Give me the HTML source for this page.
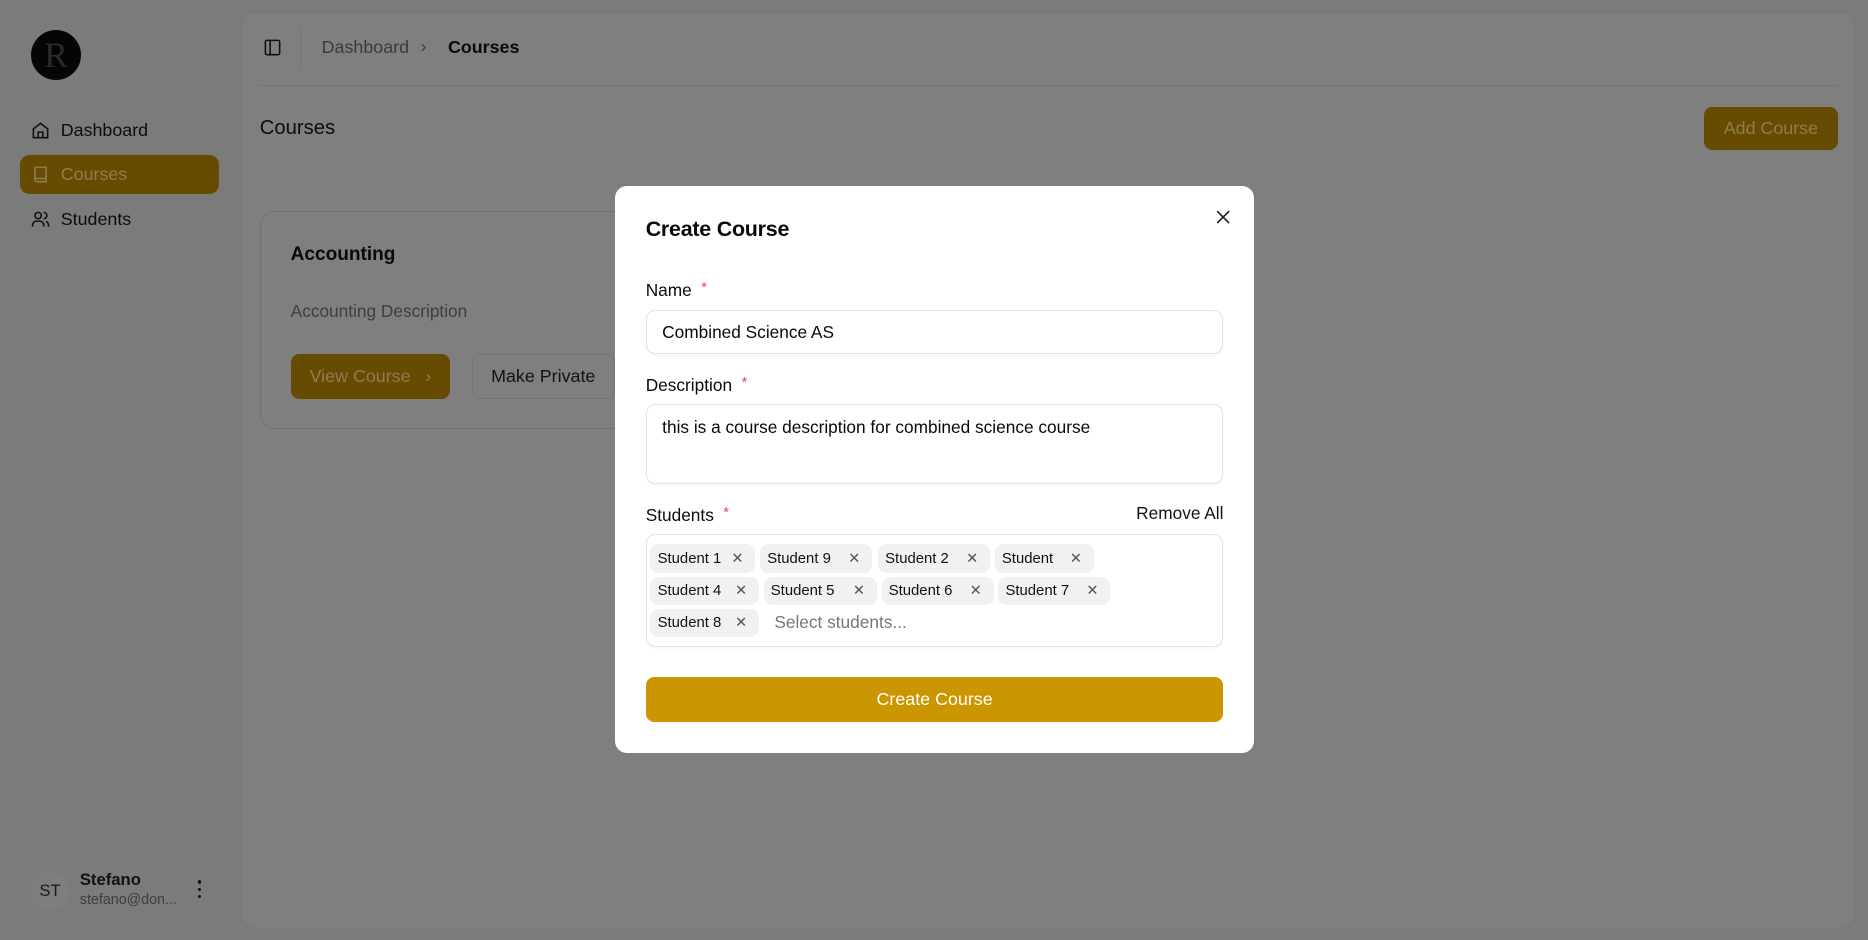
<!DOCTYPE html>
<html><head><meta charset="utf-8"><style>
html,body{margin:0;padding:0;width:1868px;height:940px;overflow:hidden;background:#7b7b7b}
#w{zoom:1.19133;width:1568px;height:789px;position:relative;font-family:"Liberation Sans",sans-serif;color:#0a0a0a}
.a{position:absolute}
.nav{position:absolute;left:17px;width:167px;height:33px;border-radius:8px;display:flex;align-items:center;font-size:15px;color:#0c0c0c}
.nav svg{margin-left:9px;margin-right:9px}
.panel{left:202px;top:10px;width:1355px;height:770px;background:#7f7f7f;border-radius:12px;border:1px solid #777;box-sizing:border-box}
.btn{position:absolute;display:flex;align-items:center;justify-content:center;border-radius:7px;font-size:15px}
.modal{left:516px;top:156px;width:537px;height:476px;background:#fff;border-radius:10px}
.lbl{position:absolute;left:26px;font-size:14.5px;color:#0a0a0a}
.lbl b{color:#e5484d;font-weight:normal;font-size:12px;margin-left:8px;vertical-align:top}
.inp{position:absolute;left:26px;width:485px;border:1px solid #e3e3e3;border-radius:8px;box-sizing:border-box;font-size:14.5px;padding-left:13px;box-shadow:0 1px 2px rgba(0,0,0,.04)}
.chip{position:absolute;height:24px;background:#f1f1f1;border-radius:7px;font-size:12.5px;display:flex;align-items:center;padding-left:6px;box-sizing:border-box;color:#111}
.chip span{margin-left:auto;margin-right:10px;color:#555;font-size:12px}
</style></head><body><div id="w">
<div class="a" style="left:26px;top:25px;width:42px;height:42px;border-radius:50%;background:#050505;color:#2a2a2a;font-size:30px;text-align:center;line-height:42px;font-family:'Liberation Serif',serif">R</div>
<div class="nav" style="top:93px"><svg width="16" height="16" viewBox="0 0 24 24" fill="none" stroke="#111" stroke-width="2"><path d="M3 10l9-7 9 7v11H3z"/><path d="M9 21v-7h6v7"/></svg>Dashboard</div>
<div class="nav" style="top:130px;background:#664b00;color:#8f7d52"><svg width="16" height="16" viewBox="0 0 24 24" fill="none" stroke="#8f7d52" stroke-width="2"><path d="M5 3h14v18H7a2 2 0 0 1-2-2z"/><path d="M5 17h14"/></svg>Courses</div>
<div class="nav" style="top:168px"><svg width="16" height="16" viewBox="0 0 24 24" fill="none" stroke="#111" stroke-width="2"><circle cx="9" cy="7" r="4"/><path d="M2 21v-2a5 5 0 0 1 5-5h4a5 5 0 0 1 5 5v2"/><path d="M16 3a4 4 0 0 1 0 8M22 21v-2a5 5 0 0 0-3-4.5"/></svg>Students</div>
<div class="a" style="left:26px;top:732px;width:32px;height:32px;border-radius:50%;background:#7e7e7e;font-size:14px;line-height:32px;text-align:center;color:#1a1a1a">ST</div>
<div class="a" style="left:67px;top:730px;font-size:14px;font-weight:bold;color:#111">Stefano</div>
<div class="a" style="left:67px;top:749px;font-size:12px;color:#3d3d3d">stefano@don...</div>
<div class="a" style="left:166px;top:739px;width:3px;font-size:0"><div style="width:3px;height:3px;border-radius:50%;background:#111;margin-bottom:3px"></div><div style="width:3px;height:3px;border-radius:50%;background:#111;margin-bottom:3px"></div><div style="width:3px;height:3px;border-radius:50%;background:#111"></div></div>
<div class="a panel"></div>
<svg class="a" style="left:221px;top:32px" width="16" height="16" viewBox="0 0 24 24" fill="none" stroke="#111" stroke-width="2"><rect x="3" y="3" width="18" height="18" rx="2"/><path d="M9 3v18"/></svg>
<div class="a" style="left:252px;top:24px;width:1px;height:32px;background:#737373"></div>
<div class="a" style="left:270px;top:31px;font-size:15px;color:#3a3a3a">Dashboard</div>
<div class="a" style="left:353px;top:30px;font-size:15px;color:#3a3a3a">›</div>
<div class="a" style="left:376px;top:31px;font-size:15px;font-weight:bold;color:#0a0a0a">Courses</div>
<div class="a" style="left:218px;top:71px;width:1325px;height:1px;background:#727272"></div>
<div class="a" style="left:218px;top:98px;font-size:17px;color:#0d0d0d">Courses</div>
<div class="btn" style="left:1430px;top:90px;width:113px;height:36px;background:#664b00;color:#8f7d52">Add Course</div>
<div class="a" style="left:218px;top:177px;width:500px;height:183px;border:1px solid #727272;border-radius:12px;box-sizing:border-box;background:#7f7f7f"></div>
<div class="a" style="left:244px;top:205px;font-size:16px;font-weight:bold;color:#0a0a0a">Accounting</div>
<div class="a" style="left:244px;top:253px;font-size:14.5px;color:#3e3e3e">Accounting Description</div>
<div class="btn" style="left:244px;top:297px;width:134px;height:38px;background:#664b00;color:#8f7d52">View Course&nbsp;&nbsp;&nbsp;›</div>
<div class="btn" style="left:396px;top:297px;width:120px;height:38px;border:1px solid #737373;box-sizing:border-box;color:#111">Make Private</div>
<div class="a modal">
<div class="a" style="left:26px;top:26px;font-size:18px;font-weight:bold;color:#0a0a0a;letter-spacing:-0.2px">Create Course</div>
<svg class="a" style="left:505px;top:20px" width="12" height="12" viewBox="0 0 12 12" stroke="#222" stroke-width="1.4"><path d="M1 1l10 10M11 1L1 11"/></svg>
<div class="lbl" style="top:79px">Name<b>*</b></div>
<div class="inp" style="top:104px;height:37px;line-height:36px">Combined Science AS</div>
<div class="lbl" style="top:159px">Description<b>*</b></div>
<div class="inp" style="top:183px;height:67px;padding-top:10px;line-height:18px">this is a course description for combined science course</div>
<div class="lbl" style="top:268px">Students<b>*</b></div>
<div class="a" style="right:26px;top:266px;font-size:14.5px;color:#111">Remove All</div>
<div class="inp" style="top:292px;height:95px"></div>
<div class="chip" style="left:30px;top:301px;width:88px">Student 1<span>✕</span></div>
<div class="chip" style="left:122px;top:301px;width:94px">Student 9<span>✕</span></div>
<div class="chip" style="left:221px;top:301px;width:94px">Student 2<span>✕</span></div>
<div class="chip" style="left:319px;top:301px;width:83px">Student<span>✕</span></div>
<div class="chip" style="left:30px;top:328px;width:91px">Student 4<span>✕</span></div>
<div class="chip" style="left:125px;top:328px;width:95px">Student 5<span>✕</span></div>
<div class="chip" style="left:224px;top:328px;width:94px">Student 6<span>✕</span></div>
<div class="chip" style="left:322px;top:328px;width:94px">Student 7<span>✕</span></div>
<div class="chip" style="left:30px;top:355px;width:91px">Student 8<span>✕</span></div>
<div class="a" style="left:134px;top:358px;font-size:14.5px;color:#777">Select students...</div>
<div class="btn" style="left:26px;top:412px;width:485px;height:38px;background:#cc9600;color:#fff">Create Course</div>
</div>
</div></body></html>
